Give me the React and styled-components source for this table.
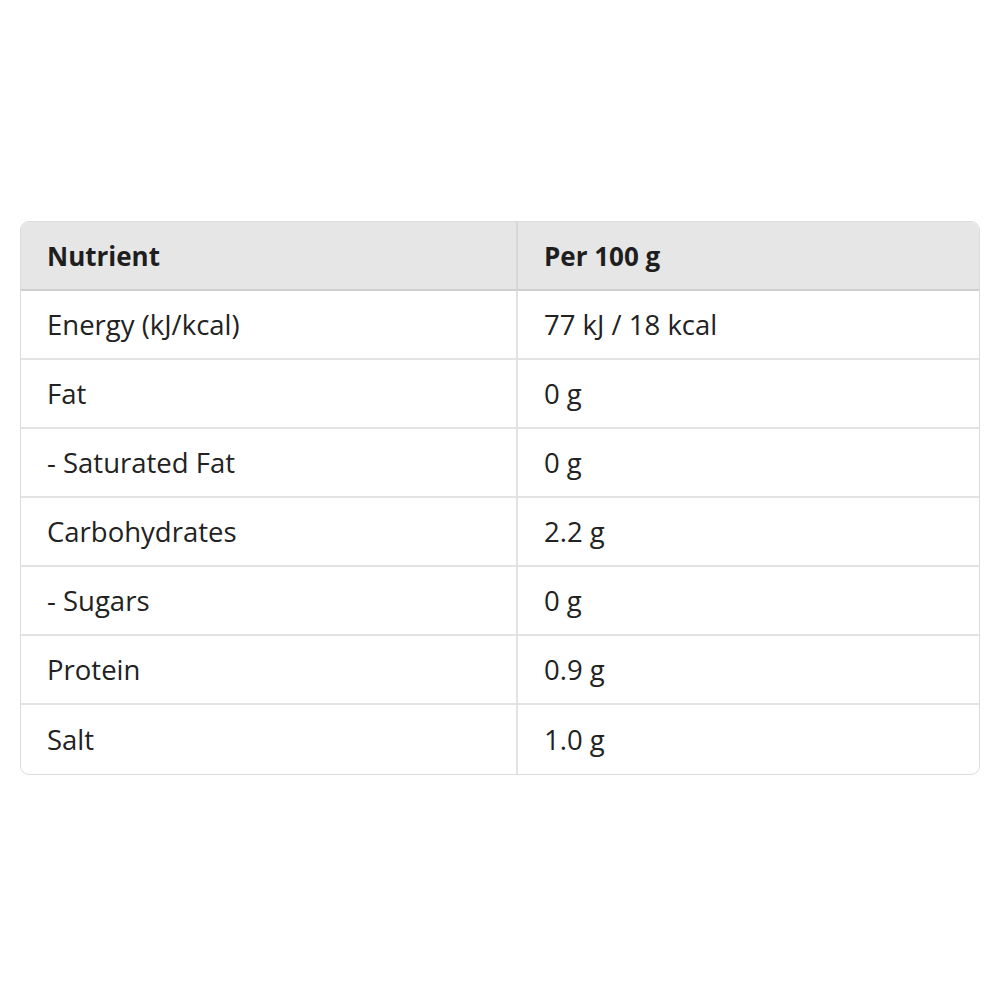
import React from 'react';
import styled, { createGlobalStyle } from 'styled-components';

const GlobalStyle = createGlobalStyle`
	html, body {
		margin: 0;
		padding: 0;
		background: #ffffff;
	}
	body {
		font-family: 'Open Sans', 'Noto Sans', 'Liberation Sans', sans-serif;
		color: #222222;
	}
`;

const rows = [
	['Energy (kJ/kcal)', '77 kJ / 18 kcal'],
	['Fat', '0 g'],
	['- Saturated Fat', '0 g'],
	['Carbohydrates', '2.2 g'],
	['- Sugars', '0 g'],
	['Protein', '0.9 g'],
	['Salt', '1.0 g'],
];

const App = () => (
	<>
		<GlobalStyle />
		<Page>
			<Table>
				<thead>
					<tr>
						<HeadCell $first>Nutrient</HeadCell>
						<HeadCell>Per 100 g</HeadCell>
					</tr>
				</thead>
				<tbody>
					{rows.map(([name, value], i) => (
						<tr key={name}>
							<Cell $first $last={i === rows.length - 1}>
								{name}
							</Cell>
							<Cell $last={i === rows.length - 1}>{value}</Cell>
						</tr>
					))}
				</tbody>
			</Table>
		</Page>
	</>
);

export default App;

const Page = styled.div`
	min-height: 100vh;
	display: flex;
	align-items: center;
	justify-content: center;
	padding: 0 20px;
	box-sizing: border-box;
	margin-top: -2px;
`;

const Table = styled.table`
	width: 960px;
	border-collapse: separate;
	border-spacing: 0;
	border: 1.5px solid #dcdcdc;
	border-radius: 9px;
	overflow: hidden;
	font-size: 27.5px;
	table-layout: fixed;
`;

const HeadCell = styled.th`
	width: ${(p) => (p.$first ? '497px' : 'auto')};
	height: 69px;
	box-sizing: border-box;
	background: #e6e6e6;
	text-align: left;
	font-size: 26px;
	font-weight: 700;
	color: #1e1e1e;
	padding: 0 26px;
	border-bottom: 2px solid #cfcfcf;
	border-right: ${(p) => (p.$first ? '2px solid #d6d6d6' : 'none')};
`;

const Cell = styled.td`
	height: 69px;
	box-sizing: border-box;
	padding: 0 26px;
	color: #222222;
	border-bottom: ${(p) => (p.$last ? 'none' : '2px solid #e3e3e3')};
	border-right: ${(p) => (p.$first ? '2px solid #e3e3e3' : 'none')};
`;
